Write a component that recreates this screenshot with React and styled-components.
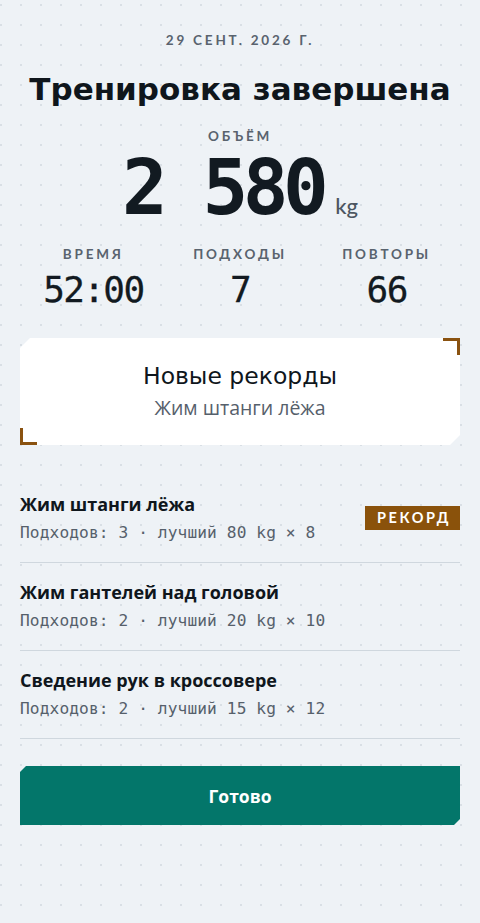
import React from "react";
import styled, {createGlobalStyle} from "styled-components";

const GlobalStyle = createGlobalStyle`
  html, body {margin:0; padding:0; background:#eef2f6;}
  body {font-family:"Open Sans", "Noto Sans", sans-serif; color:#11181f;}
`;

const Page = styled.div`
  min-height:923px; box-sizing:border-box; padding:32px 20px 40px;
  background-color:#eef2f6;
  background-image:radial-gradient(circle, #d9dfe5 1px, transparent 1.3px);
  background-size:20px 20px; background-position:-9px -5px;
  display:flex; flex-direction:column;
`;
const Caps = styled.div`
  font-family:"Lato", "Open Sans", sans-serif; font-weight:700; font-size:13.5px; line-height:16px;
  letter-spacing:2.8px; color:#59636e; text-align:center; text-transform:uppercase;
`;
const Title = styled.h1`
  margin:21px 0 0; font-family:"DejaVu Sans", sans-serif; font-weight:700; font-size:31px;
  line-height:40px; text-align:center; letter-spacing:0; color:#0f161c;
`;
const VolumeLabel = styled(Caps)`margin-top:21px; line-height:13px;`;
const Volume = styled.div`
  margin-top:15px; display:flex; justify-content:center; align-items:baseline;
  font-family:"DejaVu Sans Mono", monospace; font-weight:700; font-size:76px; line-height:60px;
  letter-spacing:-5.5px; color:#121a21;
`;
const Unit = styled.span`
  font-family:"Lato", sans-serif; font-weight:500; font-size:22px; line-height:1; letter-spacing:0;
  color:#4c5661; margin-left:12px;
`;
const Stats = styled.div`margin-top:28px; display:grid; grid-template-columns:repeat(3, 1fr);`;
const Stat = styled.div`display:flex; flex-direction:column; align-items:center;`;
const StatValue = styled.div`
  margin-top:8px; font-family:"DejaVu Sans Mono", monospace; font-weight:400; font-size:36px;
  line-height:40px; letter-spacing:-1.6px; color:#121a21; -webkit-text-stroke:0.3px #121a21;
`;
const RecordWrap = styled.div`position:relative; margin-top:28px;`;
const RecordPanel = styled.div`
  background:#fff; height:107px; display:flex; flex-direction:column; align-items:center;
  clip-path:polygon(10px 0, 100% 0, 100% calc(100% - 10px), calc(100% - 10px) 100%, 0 100%, 0 10px);
`;
const Bracket = styled.span`
  position:absolute; width:17px; height:17px; border:0 solid #8a5210; box-sizing:border-box;
  ${p => p.$corner === "tr"
    ? "top:0; right:0; border-top-width:3px; border-right-width:3px;"
    : "bottom:0; left:0; border-bottom-width:3px; border-left-width:3px;"}
`;
const RecordTitle = styled.div`
  margin-top:23px; font-family:"DejaVu Sans", sans-serif; font-size:23.5px; line-height:30px; color:#0f161c;
`;
const RecordSub = styled.div`
  margin-top:6px; font-family:"Open Sans", sans-serif; font-size:19.5px; line-height:22px; color:#56606b;
`;
const List = styled.div`margin-top:30px; display:flex; flex-direction:column;`;
const Row = styled.div`
  display:flex; align-items:center; justify-content:space-between;
  padding:17px 0 18px; border-bottom:1px solid #cfd7de;
`;
const RowText = styled.div`display:flex; flex-direction:column; gap:6px;`;
const Name = styled.div`
  font-family:"Open Sans", sans-serif; font-weight:700; font-size:18px; line-height:24px; color:#0f161c;
`;
const Detail = styled.div`
  font-family:"DejaVu Sans Mono", monospace; font-size:16.2px; line-height:22px; color:#56606b;
  letter-spacing:0.1px;
`;
const Badge = styled.span`
  background:#8a520b; color:#fff; font-family:"Lato", sans-serif; font-weight:700; font-size:14.5px;
  letter-spacing:2.6px; line-height:24px; width:95px; padding-left:3px; box-sizing:border-box;
  text-align:center; text-transform:uppercase;
`;
const DoneButton = styled.button`
  margin-top:27px; height:59px; border:0; background:#03766a; color:#fff; cursor:pointer;
  font-family:"Open Sans", sans-serif; font-weight:700; font-size:17.5px;
  clip-path:polygon(6px 0, 100% 0, 100% calc(100% - 6px), calc(100% - 6px) 100%, 0 100%, 0 6px);
`;

const exercises = [
  {name:"Жим штанги лёжа", sets:3, best:"80 kg × 8", record:true},
  {name:"Жим гантелей над головой", sets:2, best:"20 kg × 10"},
  {name:"Сведение рук в кроссовере", sets:2, best:"15 kg × 12"},
];

const stats = [["Время", "52:00"], ["Подходы", "7"], ["Повторы", "66"]];

export default function App() {
  return (
    <Page>
      <GlobalStyle />
      <Caps>29 сент. 2026 г.</Caps>
      <Title>Тренировка завершена</Title>
      <VolumeLabel>Объём</VolumeLabel>
      <Volume>2&nbsp;580<Unit>kg</Unit></Volume>
      <Stats>
        {stats.map(([label, value]) => (
          <Stat key={label}>
            <Caps>{label}</Caps>
            <StatValue>{value}</StatValue>
          </Stat>
        ))}
      </Stats>
      <RecordWrap>
        <RecordPanel>
          <RecordTitle>Новые рекорды</RecordTitle>
          <RecordSub>Жим штанги лёжа</RecordSub>
        </RecordPanel>
        <Bracket $corner="tr" />
        <Bracket $corner="bl" />
      </RecordWrap>
      <List>
        {exercises.map(ex => (
          <Row key={ex.name}>
            <RowText>
              <Name>{ex.name}</Name>
              <Detail>Подходов: {ex.sets} · лучший {ex.best}</Detail>
            </RowText>
            {ex.record && <Badge>Рекорд</Badge>}
          </Row>
        ))}
      </List>
      <DoneButton>Готово</DoneButton>
    </Page>
  );
}
